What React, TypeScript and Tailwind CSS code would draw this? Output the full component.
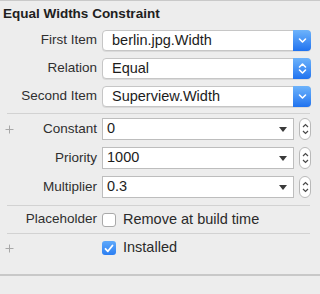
import React from 'react';

const font = "font-['Liberation_Sans',Arial,sans-serif]";

function Plus() {
  return (
    <svg width="9" height="9" viewBox="0 0 9 9" className="absolute left-[5px]">
      <path d="M4.5 0.5v8M0.5 4.5h8" stroke="#a8a8a8" strokeWidth="1" />
    </svg>
  );
}

function Popup({ value, double }: { value: string; double?: boolean }) {
  return (
    <div className="flex h-[21px] flex-1 items-stretch rounded-[4px] border border-[#c6c6c6] bg-white shadow-[0_1px_0_rgba(0,0,0,0.08)]">
      <div className="flex flex-1 items-center pl-[9px] text-[14.5px] text-[#1c1c1c]">{value}</div>
      <div className="-my-px -mr-px flex w-[18px] items-center justify-center rounded-r-[4px] bg-gradient-to-b from-[#6db3fb] to-[#1f72ef]">
        {double ? (
          <svg width="9" height="13" viewBox="0 0 9 13">
            <path d="M1.5 5l3-3 3 3M1.5 8l3 3 3-3" stroke="white" strokeWidth="1.6" fill="none" strokeLinecap="round" strokeLinejoin="round" />
          </svg>
        ) : (
          <svg width="9" height="7" viewBox="0 0 9 7">
            <path d="M1.5 2l3 3 3-3" stroke="white" strokeWidth="1.6" fill="none" strokeLinecap="round" strokeLinejoin="round" />
          </svg>
        )}
      </div>
    </div>
  );
}

function Combo({ value }: { value: string }) {
  return (
    <div className="flex flex-1 items-center gap-[5px]">
      <div className="flex h-[22px] flex-1 items-center border border-[#bdbdbd] bg-white pl-[4px] pr-[6px]">
        <span className="flex-1 text-[14.5px] text-[#1c1c1c]">{value}</span>
        <svg width="8" height="5" viewBox="0 0 8 5">
          <path d="M0 0h8L4 5z" fill="#3a3a3a" />
        </svg>
      </div>
      <div className="flex h-[22px] w-[12px] flex-col items-center justify-center gap-[2px] rounded-full border border-[#b9b9b9] bg-white">
        <svg width="7" height="5" viewBox="0 0 7 5">
          <path d="M1 4l2.5-2.5L6 4" stroke="#4a4a4a" strokeWidth="1.2" fill="none" />
        </svg>
        <svg width="7" height="5" viewBox="0 0 7 5">
          <path d="M1 1l2.5 2.5L6 1" stroke="#4a4a4a" strokeWidth="1.2" fill="none" />
        </svg>
      </div>
    </div>
  );
}

function Row({ label, children, plus, className }: { label: string; children: React.ReactNode; plus?: boolean; className?: string }) {
  return (
    <div className={`relative flex items-center ${className ?? ''}`}>
      {plus && <Plus />}
      <div className="w-[97px] pr-0 text-right text-[13.5px] text-[#2f2f2f]">{label}</div>
      <div className="ml-[5px] flex flex-1 items-center">{children}</div>
    </div>
  );
}

function Check({ checked }: { checked?: boolean }) {
  return checked ? (
    <div className="flex h-[14px] w-[14px] items-center justify-center rounded-[3px] bg-gradient-to-b from-[#5fa9fa] to-[#2a7ef2]">
      <svg width="10" height="9" viewBox="0 0 10 9">
        <path d="M1.5 4.8l2.4 2.5L8.5 1.5" stroke="white" strokeWidth="1.8" fill="none" strokeLinecap="round" strokeLinejoin="round" />
      </svg>
    </div>
  ) : (
    <div className="h-[14px] w-[14px] rounded-[3px] border border-[#a9a9a9] bg-white" />
  );
}

export default function App() {
  return (
    <div className={`${font} h-[294px] w-[320px] overflow-hidden border-t border-[#c9c9c9] bg-[#ededed]`}>
      <div className="h-[29px] pl-[3px] pt-[5px] text-[13.5px] font-bold leading-[16px] text-[#202020]">Equal Widths Constraint</div>

      <div className="flex flex-col gap-[7px] pr-[9px]">
        <Row label="First Item" className="h-[21px]">
          <Popup value="berlin.jpg.Width" />
        </Row>
        <Row label="Relation" className="h-[21px]">
          <Popup value="Equal" double />
        </Row>
        <Row label="Second Item" className="h-[21px]">
          <Popup value="Superview.Width" />
        </Row>
      </div>

      <div className="ml-[7px] mr-[10px] mt-[6px] h-px bg-[#d2d2d2]" />

      <div className="mt-[4px] flex flex-col gap-[7px] pr-[9px]">
        <Row label="Constant" plus className="h-[22px]">
          <Combo value="0" />
        </Row>
        <Row label="Priority" className="h-[22px]">
          <Combo value="1000" />
        </Row>
        <Row label="Multiplier" className="h-[22px]">
          <Combo value="0.3" />
        </Row>
      </div>

      <div className="ml-[7px] mr-[10px] mt-[7px] h-px bg-[#d2d2d2]" />

      <Row label="Placeholder" className="h-[27px]">
        <Check />
        <span className="ml-[7px] text-[14.5px] text-[#2a2a2a]">Remove at build time</span>
      </Row>

      <div className="ml-[7px] mr-[10px] h-px bg-[#d2d2d2]" />

      <Row label="" plus className="h-[28px]">
        <Check checked />
        <span className="ml-[7px] text-[14.5px] text-[#2a2a2a]">Installed</span>
      </Row>

      <div className="mt-[12px] h-[2px] bg-[#c8c8c8]" />
    </div>
  );
}
